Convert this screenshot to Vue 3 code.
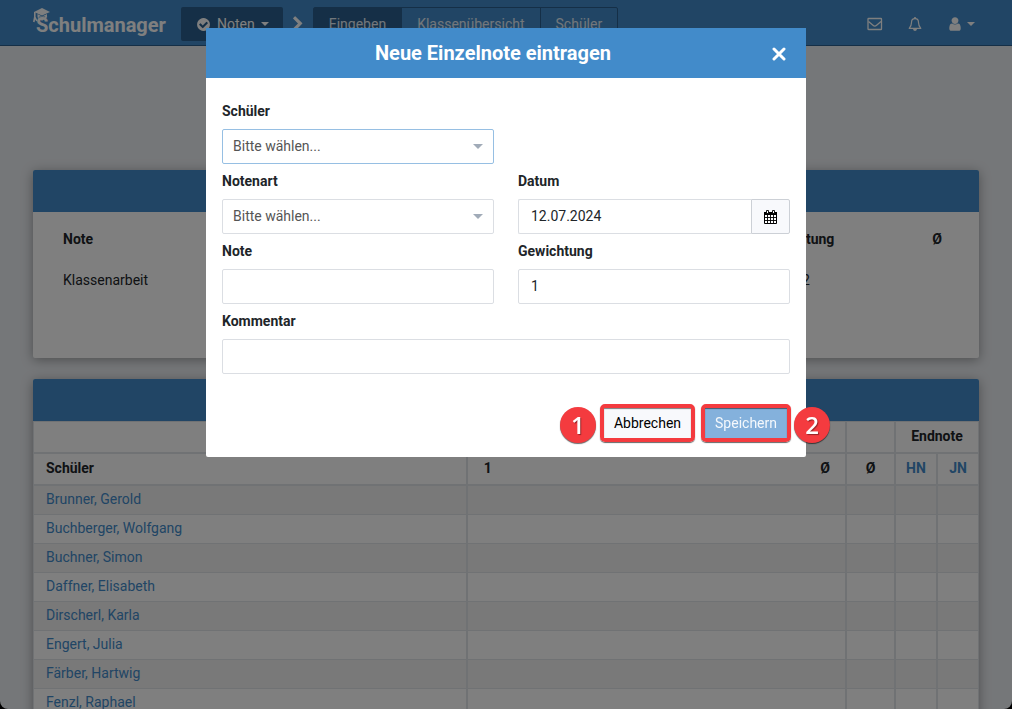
<script setup>
import { ref } from 'vue'

const students = [
  'Brunner, Gerold',
  'Buchberger, Wolfgang',
  'Buchner, Simon',
  'Daffner, Elisabeth',
  'Dirscherl, Karla',
  'Engert, Julia',
  'Färber, Hartwig',
  'Fenzl, Raphael',
]

const student = ref('')
const gradeType = ref('')
const date = ref('12.07.2024')
const grade = ref('')
const weight = ref('1')
const comment = ref('')
</script>

<template>
  <div class="page">
    <header class="navbar">
      <a class="brand" href="#">
        <svg class="cap" viewBox="0 0 20 16" width="20" height="16" aria-hidden="true">
          <path d="M1 4 9 0l8 4-8 3.500z" fill="currentColor" />
          <path d="M4.500 6 9 8.500 14 6v3.500q-5-2.500-9.500 0z" fill="currentColor" />
          <path d="M1.800 4v6M.8 14l1-5 2 4" fill="none" stroke="currentColor" stroke-width="1.600" />
          <path d="M5 9.500l4 2.500 5-3.500" fill="none" stroke="currentColor" stroke-width="1.200" />
        </svg>
        Schulmanager
      </a>
      <button class="module" type="button">
        <svg viewBox="0 0 1792 1792" width="15" height="15" aria-hidden="true"><path fill="currentColor" d="M1412 734q0-28-18-46l-91-90q-19-19-45-19t-45 19l-408 407-226-226q-19-19-45-19t-45 19l-91 90q-18 18-18 46 0 27 18 45l362 362q19 19 45 19 27 0 46-19l543-543q18-18 18-45zm252 162q0 209-103 385.500t-279.500 279.500-385.500 103-385.500-103-279.500-279.500-103-385.500 103-385.500 279.500-279.500 385.500-103 385.500 103 279.500 279.500 103 385.500z" /></svg>
        <span>Noten</span>
        <i class="caret"></i>
      </button>
      <svg class="chevron" viewBox="0 0 1792 1792" width="16" height="16" aria-hidden="true"><path fill="currentColor" d="M1363 877l-742 742q-19 19-45 19t-45-19l-166-166q-19-19-19-45t19-45l531-531-531-531q-19-19-19-45t19-45l166-166q19-19 45-19t45 19l742 742q19 19 19 45t-19 45z" /></svg>
      <nav class="tabs">
        <a class="active" href="#">Eingeben</a>
        <a href="#">Klassenübersicht</a>
        <a href="#">Schüler</a>
      </nav>
      <div class="tools">
        <button type="button" aria-label="Nachrichten">
          <svg viewBox="0 0 16 14" width="16" height="14" fill="none" stroke="currentColor" stroke-width="1.300"><rect x="1" y="1.500" width="13.500" height="11" rx="0.600" /><path d="M1.500 4.500 6 8.300q1.800 1.500 3.600 0L14 4.500" /></svg>
        </button>
        <button type="button" aria-label="Benachrichtigungen">
          <svg viewBox="0 0 14 16" width="14" height="16"><path d="M1.200 12.300Q3.500 10 3.500 6.500 3.500 2.700 7 2.700T10.500 6.500Q10.500 10 12.800 12.300z" fill="none" stroke="currentColor" stroke-width="1.200" stroke-linejoin="round" /><path d="M6.200 1h1.600v2H6.200zM5 13h4q-.3 2-2 2t-2-2z" fill="currentColor" /></svg>
        </button>
        <button type="button" aria-label="Konto">
          <svg viewBox="0 0 1792 1792" width="16" height="16"><path fill="currentColor" d="M1536 1399q0 109-62.500 187t-150.500 78h-854q-88 0-150.500-78t-62.500-187q0-85 8.500-160.500t31.500-152 58.500-131 94-89 134.500-34.500q131 128 313 128t313-128q76 0 134.500 34.500t94 89 58.500 131 31.500 152 8.500 160.500zm-256-887q0 159-112.500 271.500t-271.500 112.500-271.500-112.500-112.500-271.500 112.500-271.500 271.500-112.500 271.500 112.500 112.500 271.500z" /></svg>
          <i class="caret"></i>
        </button>
      </div>
    </header>

    <main>
      <section class="card summary">
        <div class="card-head"></div>
        <table class="weights">
          <thead>
            <tr><th>Note</th><th class="center weight">Gewichtung</th><th class="center avg">Ø</th></tr>
          </thead>
          <tbody>
            <tr><td>Klassenarbeit</td><td class="center weight value">2</td><td></td></tr>
          </tbody>
        </table>
      </section>

      <section class="card">
        <div class="card-head"></div>
        <table class="grades">
          <colgroup>
            <col class="c-name" /><col /><col class="c-sub" /><col class="c-avg" /><col class="c-end" /><col class="c-last" />
          </colgroup>
          <thead>
            <tr><th></th><th colspan="2"></th><th></th><th colspan="2" class="center">Endnote</th></tr>
            <tr>
              <th>Schüler</th>
              <th class="first open">1</th>
              <th class="center">Ø</th>
              <th class="center">Ø</th>
              <th class="center"><a href="#">HN</a></th>
              <th class="center"><a href="#">JN</a></th>
            </tr>
          </thead>
          <tbody>
            <tr v-for="name in students" :key="name">
              <td><a href="#">{{ name }}</a></td>
              <td class="open"></td><td></td><td></td><td></td><td></td>
            </tr>
          </tbody>
        </table>
      </section>
    </main>
  </div>

  <div class="backdrop">
    <form class="modal" role="dialog" aria-labelledby="dialog-title" @submit.prevent>
      <div class="modal-head">
        <h1 id="dialog-title">Neue Einzelnote eintragen</h1>
        <button class="close" type="button" aria-label="Schließen">
          <svg viewBox="0 0 14 14" width="14" height="14"><path d="M2 2l10 10M12 2L2 12" stroke="currentColor" stroke-width="3" stroke-linecap="round" /></svg>
        </button>
      </div>

      <div class="fields">
        <div class="field start">
          <label for="student">Schüler</label>
          <div class="select focus">
            <select id="student" v-model="student"><option value="">Bitte wählen...</option></select>
            <i class="caret"></i>
          </div>
        </div>
        <div class="field start">
          <label for="type">Notenart</label>
          <div class="select">
            <select id="type" v-model="gradeType"><option value="">Bitte wählen...</option></select>
            <i class="caret"></i>
          </div>
        </div>
        <div class="field">
          <label for="date">Datum</label>
          <div class="group">
            <input id="date" v-model="date" type="text" />
            <button type="button" aria-label="Kalender öffnen">
              <svg viewBox="0 0 13 14" width="13" height="14" aria-hidden="true">
                <path d="M.5 2.500h12v11H.5z" fill="#fff" stroke="currentColor" />
                <path d="M0 2h13v3H0z" fill="currentColor" />
                <path d="M1 7.500h11M1 10.500h11M3.500 5v8M6.500 5v8M9.500 5v8" fill="none" stroke="currentColor" stroke-width="0.900" />
                <path d="M2.500.5h2v3h-2zM8.500.5h2v3h-2z" fill="#fff" stroke="currentColor" stroke-width="0.900" />
              </svg>
            </button>
          </div>
        </div>
        <div class="field start">
          <label for="grade">Note</label>
          <input id="grade" v-model="grade" type="text" />
        </div>
        <div class="field">
          <label for="weight">Gewichtung</label>
          <input id="weight" v-model="weight" type="text" />
        </div>
        <div class="field wide">
          <label for="comment">Kommentar</label>
          <input id="comment" v-model="comment" type="text" />
        </div>
      </div>

      <div class="actions">
        <div class="mark">
          <span class="badge before">1</span>
          <button class="cancel" type="button">Abbrechen</button>
        </div>
        <div class="mark">
          <button class="save" type="submit">Speichern</button>
          <span class="badge after">2</span>
        </div>
      </div>
    </form>
  </div>
</template>

<style>
body {
  background: #000;
}
</style>

<style scoped>
* {
  box-sizing: border-box;
}
.page,
.backdrop {
  font: 14px/21px Roboto, sans-serif;
  color: #212529;
}
.page {
  height: 100vh;
  overflow: hidden;
  background: #ebeef2;
  border-radius: 0 0 8px 8px;
}
button,
input,
select {
  font: inherit;
  color: inherit;
}
button {
  cursor: pointer;
}
a {
  color: #428bca;
  text-decoration: none;
}
.caret {
  border: 4px solid transparent;
  border-top-color: currentColor;
  border-bottom: 0;
}

.navbar {
  display: flex;
  align-items: center;
  height: 46px;
  padding: 2px 37px 0 36px;
  background: #428bca;
  border-bottom: 1px solid #2a5f8e;
  color: #fff;
}
.brand {
  position: relative;
  width: 145px;
  font-size: 20px;
  font-weight: 700;
  line-height: 24px;
  padding-top: 2px;
  color: #fff;
}
.cap {
  position: absolute;
  left: -3px;
  top: -3px;
}
.module {
  display: flex;
  align-items: center;
  gap: 6px;
  height: 34px;
  padding: 1px 14px 0 15px;
  border: 0;
  border-radius: 2px;
  background: #2a5f8e;
}
.chevron {
  margin: 0 7px;
}
.tabs {
  display: flex;
  height: 34px;
  border: 1px solid #2a5f8e;
  border-radius: 2px;
}
.tabs a {
  padding: 0 15px;
  line-height: 33px;
  color: #e4eef7;
}
.tabs a + a {
  border-left: 1px solid #2a5f8e;
}
.tabs .active {
  background: #2a5f8e;
}
.tools {
  display: flex;
  align-items: center;
  gap: 25px;
  margin-left: auto;
}
.tools button {
  display: flex;
  align-items: center;
  gap: 4px;
  padding: 0;
  border: 0;
  background: none;
}

main {
  display: grid;
  gap: 21px;
  padding: 124px 33px 0;
}
.card {
  background: #fff;
  border-radius: 2px;
  box-shadow: 0 2px 12px rgba(0, 0, 0, 0.35);
}
.card-head {
  height: 42px;
  background: #428bca;
  border-radius: 2px 2px 0 0;
}
.summary {
  min-height: 188px;
}
table {
  width: 100%;
  table-layout: fixed;
  border-collapse: separate;
  border-spacing: 0;
}
th {
  text-align: left;
  font-weight: 700;
}
.center {
  text-align: center;
}
.weights th,
.weights td {
  height: 41px;
  padding: 0 30px;
}
.weights {
  margin-top: 7px;
}
.weights .weight {
  width: 196px;
}
.weights .value {
  padding-left: 48px;
}
.weights .avg {
  width: 84px;
}
.grades {
  border-left: 1px solid #e1e4e8;
  border-top: 1px solid #e1e4e8;
}
.grades th,
.grades td {
  padding: 0 12px 2px;
  border-right: 2px solid #e1e4e8;
}
.grades th {
  height: 32px;
  border-bottom: 2px solid #e1e4e8;
}
.grades td {
  height: 29px;
  border-bottom: 1px solid #e1e4e8;
}
.grades th:last-child,
.grades td:last-child {
  border-right-width: 1px;
}
.grades .center {
  padding: 0 0 2px;
}
.grades .open {
  border-right: 0;
}
.grades .first {
  padding-left: 16px;
}
.grades tbody tr:nth-child(odd) {
  background: #f2f2f2;
}
.c-name {
  width: 45.9%;
}
.c-sub {
  width: 42px;
}
.c-avg {
  width: 49px;
}
.c-end {
  width: 42px;
}
.c-last {
  width: 41px;
}

.backdrop {
  position: fixed;
  inset: 0;
  padding: 28px 16px;
  background: rgba(0, 0, 0, 0.5);
}
.modal {
  max-width: 600px;
  margin: 0 auto;
  background: #fff;
  border-radius: 2px;
}
.modal-head {
  display: flex;
  align-items: center;
  height: 50px;
  padding: 0 18px 0 16px;
  background: #428bca;
  color: #fff;
}
h1 {
  flex: 1;
  margin: 0;
  padding-right: 6px;
  text-align: center;
  font-size: 20px;
  font-weight: 700;
}
.close {
  display: flex;
  padding: 4px 2px 2px;
  border: 0;
  background: none;
}
.fields {
  display: grid;
  grid-template-columns: 1fr 1fr;
  gap: 7px 24px;
  padding: 23px 16px 30px;
}
.start {
  grid-column: 1;
}
.wide {
  grid-column: 1 / -1;
}
label {
  display: block;
  margin-bottom: 7px;
  font-weight: 700;
}
input,
select {
  display: block;
  width: 100%;
  height: 35px;
  padding: 0 12px 1px;
  background: #fff;
  border: 1px solid #dbdee3;
  border-radius: 2px;
}
.select {
  position: relative;
  color: #555;
}
select {
  appearance: none;
  padding: 0 10px;
}
.focus select {
  border-color: #96bfe3;
}
.select .caret {
  position: absolute;
  right: 11px;
  top: 15px;
  border-width: 5px 5px 0;
  color: #a1abb8;
}
.group {
  display: flex;
}
.group input {
  flex: 1;
  min-width: 0;
  border-right: 0;
  border-radius: 2px 0 0 2px;
}
.group button {
  display: grid;
  place-items: center;
  width: 39px;
  padding: 0;
  background: #f8f9fc;
  border: 1px solid #ccd0d6;
  border-radius: 0 2px 2px 0;
  color: #000;
}
.actions {
  display: flex;
  justify-content: flex-end;
  gap: 6px;
  padding: 0 15px 15px;
}
.mark {
  position: relative;
  border: 4px solid #f43b3f;
  border-radius: 5px;
  box-shadow: 0 1px 1px rgba(0, 0, 0, 0.6);
}
.mark button {
  display: block;
  height: 30px;
  padding: 0 10px;
  border: 0;
  box-shadow: inset 0 1px 1px rgba(0, 0, 0, 0.5);
}
.cancel {
  background: #f8f9fc;
  color: #000;
}
.save {
  background: #84b1dc;
  color: #f4f8fc;
}
.badge {
  position: absolute;
  top: -1px;
  width: 36px;
  height: 36px;
  border-radius: 50%;
  background: #f43b3f;
  box-shadow: 0 1px 1px rgba(0, 0, 0, 0.6);
  color: #fff;
  font: 600 24px/36px "Open Sans", sans-serif;
  text-align: center;
  text-shadow: 1px 1px 1px rgba(0, 0, 0, 0.4);
}
.before {
  right: calc(100% + 8px);
}
.after {
  left: calc(100% + 7px);
}
</style>
